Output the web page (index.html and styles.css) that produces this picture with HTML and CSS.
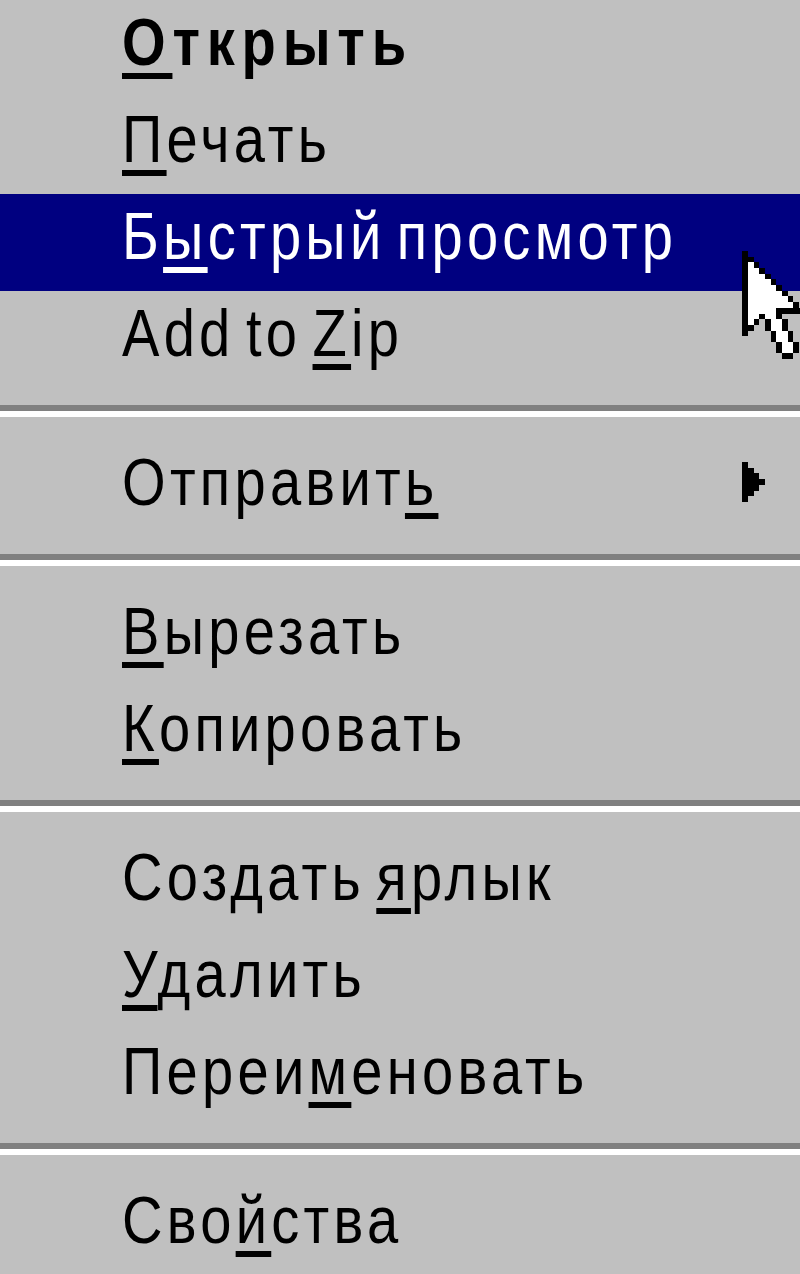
FILE: index.html
```html
<!DOCTYPE html>
<html lang="ru">
<head>
  <meta charset="UTF-8" />
  <title>Контекстное меню</title>
  <link rel="stylesheet" href="styles.css">
</head>
<body>

  <div class="menu">
    <div class="item default"><span class="label"><u>О</u>ткрыть</span></div>
    <div class="item"><span class="label"><u>П</u>ечать</span></div>
    <div class="item active"><span class="label">Б<u>ы</u>стрый просмотр</span></div>
    <div class="item"><span class="label">Add to <u>Z</u>ip</span></div>

    <div class="sep"></div>

    <div class="item">
      <span class="label">Отправит<u>ь</u></span>
      <svg class="submenu" viewBox="0 0 4 7" width="23" height="40" shape-rendering="crispEdges">
        <path d="M0 0H1V1H2V2H3V3H4V4H3V5H2V6H1V7H0Z" fill="#000"/>
      </svg>
    </div>

    <div class="sep"></div>

    <div class="item"><span class="label"><u>В</u>ырезать</span></div>
    <div class="item"><span class="label"><u>К</u>опировать</span></div>

    <div class="sep"></div>

    <div class="item"><span class="label">Создать <u>я</u>рлык</span></div>
    <div class="item"><span class="label"><u>У</u>далить</span></div>
    <div class="item"><span class="label">Переи<u>м</u>еновать</span></div>

    <div class="sep"></div>

    <div class="item"><span class="label">Сво<u>й</u>ства</span></div>
  </div>

  <!-- указатель мыши поверх меню -->
  <svg class="cursor" viewBox="0 0 11 19" width="63" height="108" shape-rendering="crispEdges">
    <path fill="#fff" d="M1 2h1v1h-1z M1 3h2v1h-2z M1 4h3v1h-3z M1 5h4v1h-4z M1 6h5v1h-5z M1 7h6v1h-6z M1 8h7v1h-7z M1 9h8v1h-8z M1 10h5v1h-5z M1 11h2v1h-2z M4 11h2v1h-2z M1 12h1v1h-1z M5 12h2v1h-2z M5 13h2v1h-2z M6 14h2v1h-2z M6 15h2v1h-2z M7 16h2v1h-2z M7 17h2v1h-2z"/>
    <path fill="#000" d="M0 0h1v15h-1z M1 1h1v1h-1z M2 2h1v1h-1z M3 3h1v1h-1z M4 4h1v1h-1z M5 5h1v1h-1z M6 6h1v1h-1z M7 7h1v1h-1z M8 8h1v1h-1z M9 9h1v1h-1z M6 10h5v1h-5z M3 11h1v1h-1z M6 11h1v1h-1z M2 12h1v1h-1z M4 12h1v1h-1z M7 12h1v1h-1z M1 13h1v1h-1z M4 13h1v1h-1z M7 13h1v1h-1z M5 14h1v1h-1z M8 14h1v1h-1z M5 15h1v1h-1z M8 15h1v1h-1z M6 16h1v1h-1z M9 16h1v1h-1z M6 17h1v1h-1z M9 17h1v1h-1z M7 18h2v1h-2z"/>
  </svg>

</body>
</html>
```

FILE: styles.css
```css
body {
  margin: 0;
  padding: 0;
  background-color: #c0c0c0;
  font-family: "Liberation Sans", Arial, sans-serif;
  color: #000;
  overflow: hidden;
}

.menu {
  background-color: #c0c0c0;
}

.item {
  display: flex;
  align-items: flex-start;
  justify-content: space-between;
  height: 97px;
  box-sizing: border-box;
  padding: 0 35px 12px 122px;
  font-size: 66px;
  line-height: 85px;
  white-space: nowrap;
}

/* узкие «пиксельные» буквы с просветами */
.label {
  display: inline-block;
  letter-spacing: 5px;
  word-spacing: -10px;
  transform: scaleX(0.85);
  transform-origin: left center;
}

.item u {
  text-decoration-thickness: 6px;
  text-underline-offset: 8px;
}

.default {
  font-weight: bold;
}

.default .label {
  letter-spacing: 8px;
}

.active {
  background-color: #000080;
  color: #fff;
}

.submenu {
  margin-top: 22px;
}

.sep {
  height: 52px;
  box-sizing: border-box;
  padding-top: 17px;
}

.sep::before {
  content: '';
  display: block;
  height: 6px;
  background-color: #808080;
  border-bottom: 6px solid #fff;
}

.cursor {
  position: absolute;
  left: 742px;
  top: 251px;
}
```
